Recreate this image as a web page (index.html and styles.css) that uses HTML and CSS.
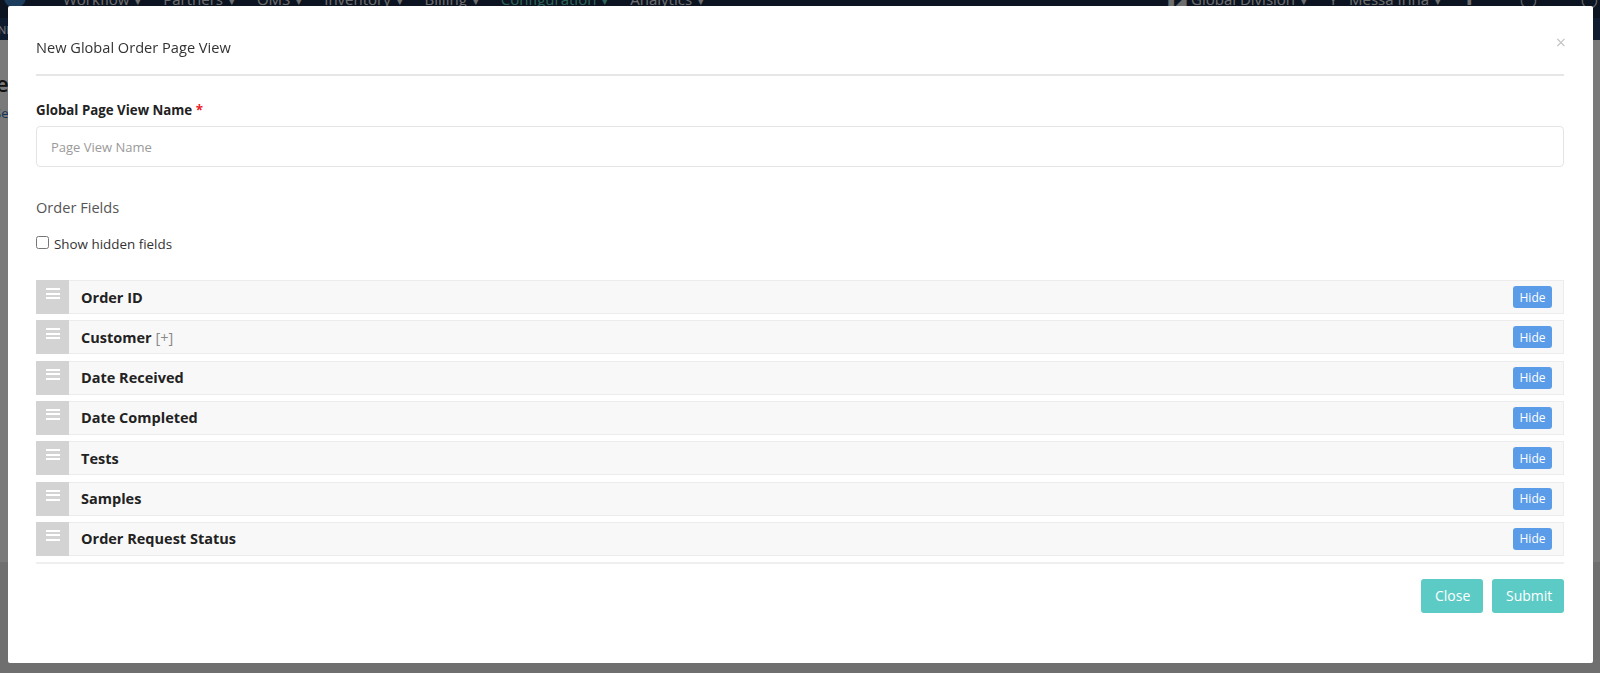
FILE: index.html
```html
<!DOCTYPE html>
<html lang="en">
<head>
<meta charset="utf-8">
<title>New Global Order Page View</title>
<link rel="stylesheet" href="styles.css">
</head>
<body>
<div class="page">
  <header class="topnav">
    <div class="brand"></div>
    <nav class="menu">
      <span class="menu-item">Workflow <span class="caret">▾</span></span>
      <span class="menu-item">Partners <span class="caret">▾</span></span>
      <span class="menu-item">OMS <span class="caret">▾</span></span>
      <span class="menu-item">Inventory <span class="caret">▾</span></span>
      <span class="menu-item">Billing <span class="caret">▾</span></span>
      <span class="menu-item active">Configuration <span class="caret">▾</span></span>
      <span class="menu-item">Analytics <span class="caret">▾</span></span>
    </nav>
    <nav class="menu right">
      <span class="menu-item">▮◢ Global Division <span class="caret">▾</span></span>
      <span class="menu-item">Y&nbsp;&nbsp; Messa Irina <span class="caret">▾</span></span>
      <span class="menu-item icon">⬆</span>
      <span class="menu-item icon">◯</span>
      <span class="menu-item icon last">◯</span>
    </nav>
  </header>
  <div class="subbar"><span class="subtag">ND</span></div>
  <main class="page-body">
    <div class="page-title">e</div>
    <div class="page-link">Se</div>
  </main>
  <footer class="page-foot"></footer>
</div>

<div class="backdrop"></div>

<div class="modal">
  <div class="modal-header">
    <h4 class="modal-title">New Global Order Page View</h4>
    <span class="modal-close">×</span>
  </div>
  <div class="modal-body">
    <label class="field-label">Global Page View Name <span class="req">*</span></label>
    <input class="text-input" type="text" placeholder="Page View Name">

    <h5 class="section-title">Order Fields</h5>
    <label class="check-row"><input type="checkbox" class="check"> Show hidden fields</label>

    <ul class="field-list">
      <li class="field-row"><span class="handle"><i></i><i></i><i></i></span><span class="field-name">Order ID</span><button class="hide-btn">Hide</button></li>
      <li class="field-row"><span class="handle"><i></i><i></i><i></i></span><span class="field-name">Customer <span class="expand">[+]</span></span><button class="hide-btn">Hide</button></li>
      <li class="field-row"><span class="handle"><i></i><i></i><i></i></span><span class="field-name">Date Received</span><button class="hide-btn">Hide</button></li>
      <li class="field-row"><span class="handle"><i></i><i></i><i></i></span><span class="field-name">Date Completed</span><button class="hide-btn">Hide</button></li>
      <li class="field-row"><span class="handle"><i></i><i></i><i></i></span><span class="field-name">Tests</span><button class="hide-btn">Hide</button></li>
      <li class="field-row"><span class="handle"><i></i><i></i><i></i></span><span class="field-name">Samples</span><button class="hide-btn">Hide</button></li>
      <li class="field-row"><span class="handle"><i></i><i></i><i></i></span><span class="field-name">Order Request Status</span><button class="hide-btn">Hide</button></li>
    </ul>
  </div>
  <div class="modal-footer">
    <button class="btn-teal">Close</button>
    <button class="btn-teal">Submit</button>
  </div>
</div>
</body>
</html>
```

FILE: styles.css
```css
* { box-sizing: border-box; }

html, body {
  margin: 0;
  padding: 0;
  height: 100%;
  overflow: hidden;
  font-family: "Open Sans", "Noto Sans", "Liberation Sans", sans-serif;
}

body { background: #ffffff; }

.page {
  display: flex;
  flex-direction: column;
  height: 673px;
}

.topnav {
  height: 18px;
  background: #1a2a45;
  display: flex;
  align-items: flex-start;
  overflow: hidden;
}
.brand {
  width: 22px;
  height: 22px;
  border-radius: 50%;
  background: #3c7dc4;
  margin: -14px 0 0 4px;
  flex: none;
}
.menu {
  display: flex;
  margin-left: 37px;
  margin-top: -11px;
}
.menu.right { margin-left: auto; margin-right: 2px; }
.menu-item {
  color: #e6e6e6;
  font-size: 15px;
  line-height: 20px;
  padding-right: 22px;
  white-space: nowrap;
}
.caret { font-size: 11px; margin-left: 2px; }
.menu-item.icon { padding-right: 44px; }
.menu-item.last { padding-right: 0; }
.menu-item.active { color: #5cd6b8; }

.subbar {
  height: 22px;
  background: #203a63;
  display: flex;
  align-items: center;
}
.subtag { color: #fff; font-size: 11px; margin-left: -2px; }

.page-body {
  flex: 1;
  background: #ffffff;
  padding: 28px 0 0 0;
}
.page-title { font-size: 22px; color: #222; font-weight: 600; margin-left: -4px; }
.page-link { font-size: 13px; color: #2a6db5; margin-top: 6px; margin-left: -6px; }

.page-foot {
  height: 111px;
  background: #e8e8e8;
}

.backdrop {
  position: fixed;
  inset: 0;
  background: rgba(0, 0, 0, 0.52);
}

.modal {
  position: fixed;
  left: 8px;
  top: 6px;
  width: 1585px;
  height: 657px;
  background: #ffffff;
  border-radius: 2px;
  display: flex;
  flex-direction: column;
  padding: 0 29px 0 28px;
}

.modal-header {
  position: relative;
  padding-top: 31px;
  padding-bottom: 17px;
  border-bottom: 2px solid #e6e6e6;
}
.modal-title {
  margin: 0;
  font-size: 14.6px;
  line-height: 20px;
  font-weight: 400;
  color: #333;
}
.modal-close {
  position: absolute;
  right: -2px;
  top: 26px;
  font-size: 18px;
  line-height: 20px;
  color: #c4c4c4;
}

.modal-body {
  padding-top: 25px;
  display: flex;
  flex-direction: column;
}

.field-label {
  font-size: 13.3px;
  line-height: 18px;
  font-weight: 700;
  color: #222;
}
.req { color: #e8232a; font-weight: 700; }

.text-input {
  margin-top: 7px;
  height: 41px;
  border: 1px solid #e4e4e4;
  border-radius: 4px;
  padding: 0 14px;
  font-family: inherit;
  font-size: 13px;
  color: #333;
  outline: none;
}
.text-input::placeholder { color: #9a9a9a; }

.section-title {
  margin: 30px 0 0 0;
  font-size: 14.6px;
  line-height: 20px;
  font-weight: 400;
  color: #555;
}

.check-row {
  margin-top: 18px;
  display: flex;
  align-items: center;
  font-size: 13.4px;
  line-height: 18px;
  color: #333;
}
.check {
  margin: 0 5px 0 0;
  width: 13px;
  height: 13px;
  position: relative;
  top: -2px;
}

.field-list {
  list-style: none;
  margin: 27px 0 0 0;
  padding: 0;
  display: flex;
  flex-direction: column;
  gap: 6.33px;
}
.field-row {
  height: 34px;
  background: #f8f8f8;
  border: 1px solid #ececec;
  display: flex;
  align-items: center;
}
.handle {
  align-self: stretch;
  width: 33px;
  margin: -1px 0 -1px -1px;
  background: #d3d3d3;
  display: flex;
  flex-direction: column;
  align-items: center;
  gap: 2.5px;
  padding-top: 8px;
}
.handle i {
  display: block;
  width: 14px;
  height: 2px;
  background: #ffffff;
}
.field-name {
  margin-left: 12px;
  font-size: 14.5px;
  font-weight: 700;
  color: #222;
  flex: 1;
}
.expand { font-weight: 400; color: #888; }

.hide-btn {
  width: 39px;
  height: 22px;
  margin-right: 11px;
  background: #5b9ce8;
  color: #ffffff;
  border: none;
  border-radius: 3px;
  font-family: inherit;
  font-size: 12px;
  font-weight: 500;
  padding: 0;
}

.modal-footer {
  margin-top: 6px;
  border-top: 2px solid #efefef;
  padding-top: 15px;
  display: flex;
  justify-content: flex-end;
  gap: 9px;
}
.btn-teal {
  height: 34px;
  background: #5ccbc6;
  color: #ffffff;
  border: none;
  border-radius: 3px;
  font-family: inherit;
  font-size: 14px;
  padding: 0 14px;
}
.btn-teal:first-child { width: 62px; }
.btn-teal:last-child { width: 72px; }
```
